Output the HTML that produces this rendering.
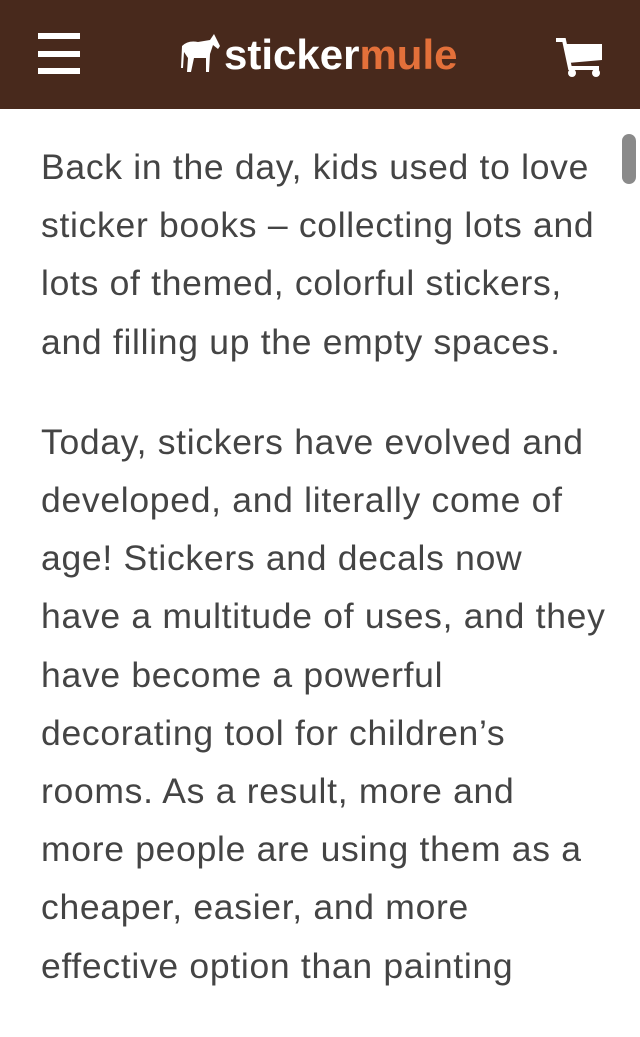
<!DOCTYPE html>
<html><head><style>
body{margin:0;width:640px;height:959px;overflow:hidden;background:#fff;font-family:"Liberation Sans",sans-serif;position:relative}
.hd{height:109px;background:#48291c;position:relative}
.hb{position:absolute;left:38px;width:42px;height:6px;background:#fff}
.logo{position:absolute;font-size:42px;font-weight:bold;color:#fff;letter-spacing:0}
.logo span{color:#e3703a}
.c{position:absolute;left:41px;top:138px;width:600px;color:#444;font-size:35.5px;letter-spacing:0.7px;line-height:58.2px;white-space:nowrap}
p{margin:0 0 42px}
.sb{position:absolute;left:622px;top:134px;width:14px;height:50px;border-radius:7px;background:#8a8a8a}
</style></head><body>
<div class="hd">
<div class="hb" style="top:33px"></div><div class="hb" style="top:51px"></div><div class="hb" style="top:68px"></div>
<svg style="position:absolute;left:180px;top:32px" width="42" height="42" viewBox="0 0 42 42"><path d="M2 14 Q8 8 18 10 L30 8 L34 2 L36 6 L40 14 L38 17 L33 13 L30 22 L29 40 L26 40 L26 26 L14 26 L11 40 L7 40 L8 26 L4 20 L3 36 L1 36 Z" fill="#fff"/></svg>
<div class="logo" style="left:224px;top:31px">sticker<span>mule</span></div>
<svg style="position:absolute;left:555px;top:38px" width="48" height="40" viewBox="0 0 48 40"><path d="M1 2 H9 L15 30 H44" stroke="#fff" stroke-width="4" fill="none"/><path d="M9 6 H47 V22 L13 25 Z" fill="#fff"/><circle cx="17" cy="35" r="4" fill="#fff"/><circle cx="41" cy="35" r="4" fill="#fff"/></svg>
</div>
<div class="c">
<p>Back in the day, kids used to love<br>sticker books – collecting lots and<br>lots of themed, colorful stickers,<br>and filling up the empty spaces.</p>
<p>Today, stickers have evolved and<br>developed, and literally come of<br>age! Stickers and decals now<br>have a multitude of uses, and they<br>have become a powerful<br>decorating tool for children’s<br>rooms. As a result, more and<br>more people are using them as a<br>cheaper, easier, and more<br>effective option than painting</p>
</div>
<div class="sb"></div>
</body></html>
